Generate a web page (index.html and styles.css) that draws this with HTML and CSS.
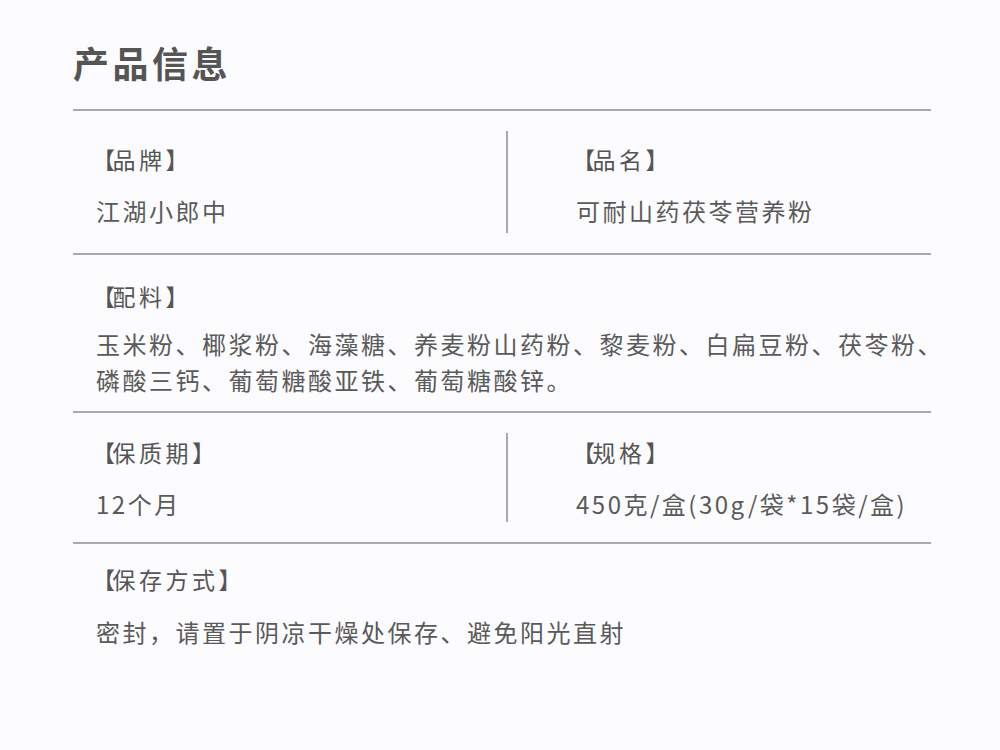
FILE: index.html
```html
<!DOCTYPE html>
<html lang="zh-CN">
<head>
<meta charset="utf-8">
<title>产品信息</title>
<link rel="stylesheet" href="styles.css">
</head>
<body>
<div class="page">
  <h1 class="title">产品信息</h1>
  <div class="table">
    <div class="row row-1">
      <div class="cell cell-left">
        <div class="label"><span class="br">【</span>品牌】</div>
        <div class="value">江湖小郎中</div>
      </div>
      <div class="divider"></div>
      <div class="cell cell-right">
        <div class="label"><span class="br">【</span>品名】</div>
        <div class="value">可耐山药茯苓营养粉</div>
      </div>
    </div>
    <div class="row row-2">
      <div class="cell cell-full">
        <div class="label"><span class="br">【</span>配料】</div>
        <div class="value value-multi">玉米粉、椰浆粉、海藻糖、养麦粉山药粉、黎麦粉、白扁豆粉、茯苓粉、磷酸三钙、葡萄糖酸亚铁、葡萄糖酸锌。</div>
      </div>
    </div>
    <div class="row row-3">
      <div class="cell cell-left">
        <div class="label"><span class="br">【</span>保质期】</div>
        <div class="value">12个月</div>
      </div>
      <div class="divider"></div>
      <div class="cell cell-right">
        <div class="label"><span class="br">【</span>规格】</div>
        <div class="value">450克/盒(30g/袋*15袋/盒)</div>
      </div>
    </div>
    <div class="row row-4">
      <div class="cell cell-full">
        <div class="label"><span class="br">【</span>保存方式】</div>
        <div class="value">密封，请置于阴凉干燥处保存、避免阳光直射</div>
      </div>
    </div>
  </div>
</div>
</body>
</html>
```

FILE: styles.css
```css
html, body {
  margin: 0;
  padding: 0;
  background: #fcfcfe;
}
body {
  font-family: "Noto Sans CJK SC", "Noto Sans", sans-serif;
  color: #585858;
  width: 1000px;
  height: 750px;
  overflow: hidden;
}
.page {
  padding: 37px 69px 0 73px;
}
.title {
  margin: 0;
  font-size: 36px;
  line-height: 50px;
  font-weight: 700;
  letter-spacing: 3.5px;
  color: #555;
}
.table {
  margin-top: 22px;
  border-top: 2px solid #aaa;
}
.row {
  display: flex;
  border-bottom: 2px solid #aaa;
}
.row-4 {
  border-bottom: none;
}
.cell {
  display: flex;
  flex-direction: column;
}
.cell-left {
  width: 410px;
  padding-left: 23px;
}
.cell-right {
  flex: 1;
  padding-left: 68px;
}
.cell-full {
  flex: 1;
  padding-left: 23px;
}
.divider {
  width: 2px;
  background: #aaa;
  margin: 20px 0;
}
.label {
  font-size: 23px;
  line-height: 36px;
  letter-spacing: 3.5px;
  color: #555;
  margin-left: -4px;
}
.br {
  letter-spacing: -2.5px;
}
.value {
  font-size: 24px;
  line-height: 36px;
  letter-spacing: 2.5px;
  color: #5a5a5a;
}
.value-multi {
  margin-right: -24px;
}
.row-1 .cell { padding-top: 30px; padding-bottom: 24px; }
.row-1 .value { margin-top: 16px; }
.row-2 .cell { padding-top: 23px; padding-bottom: 13px; }
.row-2 .value { margin-top: 12px; }
.row-3 .cell { padding-top: 21px; padding-bottom: 20px; }
.row-3 .value { margin-top: 16px; }
.row-4 .cell { padding-top: 17px; }
.row-4 .value { margin-top: 17px; }
```
